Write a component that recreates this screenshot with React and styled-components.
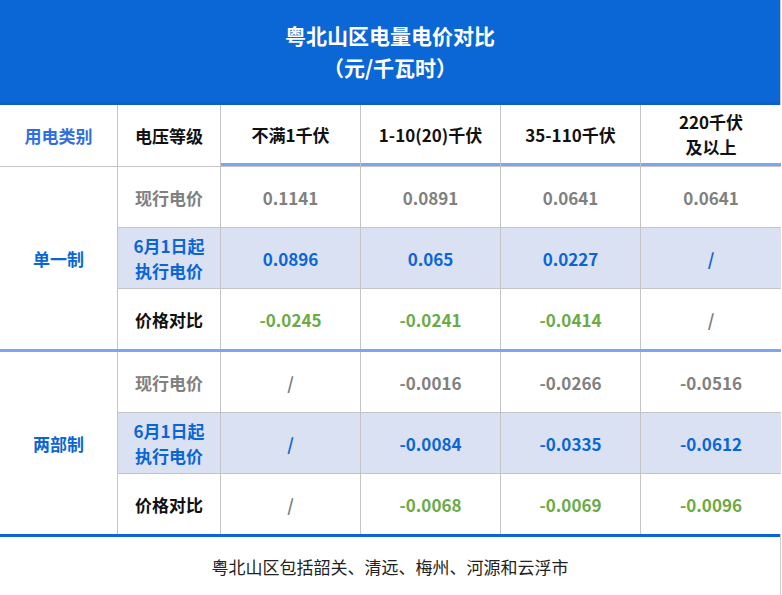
import React from "react";
import styled, { createGlobalStyle } from "styled-components";

const G = createGlobalStyle`
  body{margin:0;background:#fff;font-family:"Noto Sans CJK SC","Noto Sans",sans-serif;}
`;
const Wrap = styled.div`width:781px;height:595px;border-right:1px solid #c9cdd6;box-sizing:border-box;display:flex;flex-direction:column;`;
const Title = styled.div`
  flex-shrink:0;
  background:#0b66d6;color:#fff;height:102px;border-bottom:3px solid #0a5fc8;
  display:flex;flex-direction:column;align-items:center;justify-content:center;
  font-weight:700;font-size:21px;line-height:32px;
`;
const Grid = styled.div`
  flex-shrink:0;
  display:grid;grid-template-columns:117px 102px 139px 139px 139px 140px;
  grid-template-rows:61px repeat(3,60px) 1px repeat(3,60px);gap:1px;background:#c4c4c4;
`;
const Cell = styled.div`
  background:${p => (p.$hl ? "#dae1f2" : "#fff")};
  display:flex;align-items:center;justify-content:center;text-align:center;
  font-weight:700;font-size:17px;line-height:25px;
  color:${p => p.$c || "#111"};
  ${p => p.$span && `grid-row:span ${p.$span};`}
  ${p => p.$ul && `box-sizing:border-box;border-bottom:3px solid #7aa6f2;`}
`;
const Sep = styled.div`grid-column:1 / -1;background:#7aa6f2;height:3px;margin:-1px 0;`;
const Footer = styled.div`
  flex:1;border-top:3px solid #0a66d6;display:flex;align-items:center;justify-content:center;
  font-size:17px;color:#222;
`;
const GR = "#808080", BL = "#0a66d6", GN = "#6aab46", CAT = "#2f6ee0";

const groups = [
  { name: "单一制", rows: [
    ["现行电价", GR, false, ["0.1141","0.0891","0.0641","0.0641"], GR],
    ["6月1日起\n执行电价", BL, true, ["0.0896","0.065","0.0227","/"], BL],
    ["价格对比", "#111", false, ["-0.0245","-0.0241","-0.0414","/"], [GN,GN,GN,GR]],
  ]},
  { name: "两部制", rows: [
    ["现行电价", GR, false, ["/","-0.0016","-0.0266","-0.0516"], GR],
    ["6月1日起\n执行电价", BL, true, ["/","-0.0084","-0.0335","-0.0612"], BL],
    ["价格对比", "#111", false, ["/","-0.0068","-0.0069","-0.0096"], [GR,GN,GN,GN]],
  ]},
];

export default function App() {
  return (
    <Wrap>
      <G />
      <Title><div>粤北山区电量电价对比</div><div>（元/千瓦时）</div></Title>
      <Grid>
        <Cell $c={CAT}>用电类别</Cell>
        <Cell>电压等级</Cell>
        <Cell $ul>不满1千伏</Cell>
        <Cell $ul>1-10(20)千伏</Cell>
        <Cell $ul>35-110千伏</Cell>
        <Cell $ul>220千伏<br />及以上</Cell>
        {groups.map((g, gi) => (
          <React.Fragment key={gi}>
            {gi > 0 && <Sep />}
            <Cell $span={3} $c={BL}>{g.name}</Cell>
            {g.rows.map((r, ri) => (
              <React.Fragment key={ri}>
                <Cell $hl={r[2]} $c={r[1]} style={{ whiteSpace: "pre-line" }}>{r[0]}</Cell>
                {r[3].map((v, vi) => (
                  <Cell key={vi} $hl={r[2]} $c={Array.isArray(r[4]) ? r[4][vi] : r[4]}>{v}</Cell>
                ))}
              </React.Fragment>
            ))}
          </React.Fragment>
        ))}
      </Grid>
      <Footer>粤北山区包括韶关、清远、梅州、河源和云浮市</Footer>
    </Wrap>
  );
}
